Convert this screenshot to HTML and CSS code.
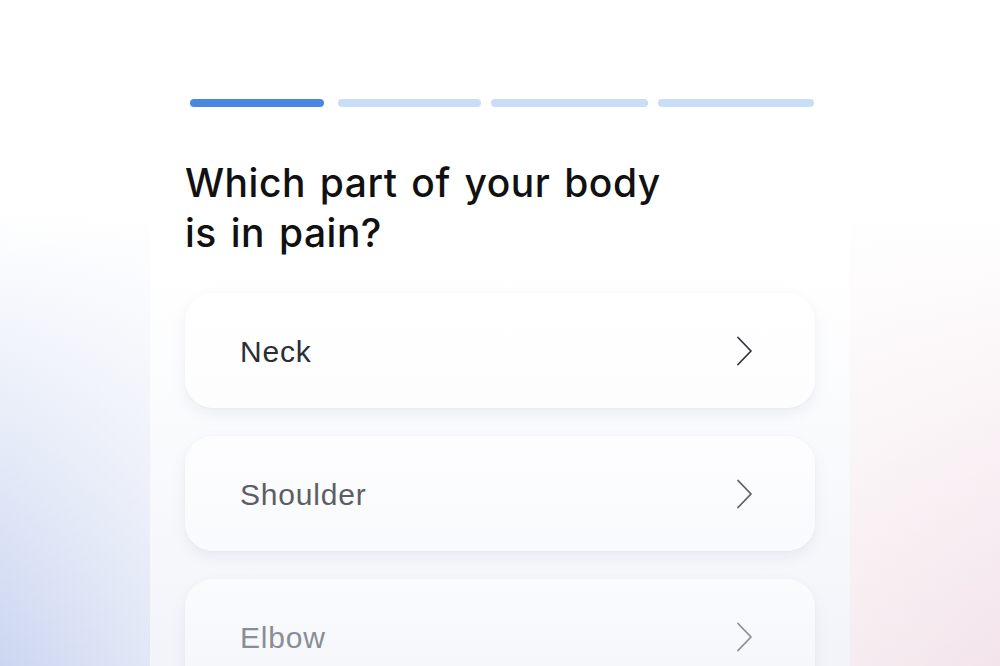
FILE: index.html
```html
<!DOCTYPE html>
<html lang="en">
<head>
<meta charset="utf-8">
<title>Pain location</title>
<link rel="stylesheet" href="styles.css">
</head>
<body>
<div class="page">
  <main class="panel">
    <div class="progress">
      <span class="seg seg-1 active"></span>
      <span class="seg seg-2"></span>
      <span class="seg seg-3"></span>
      <span class="seg seg-4"></span>
    </div>
    <h1 class="title">Which part of your body<br>is in pain?</h1>
    <ul class="options">
      <li class="option opt-1"><span class="label">Neck</span>
        <svg class="chev" viewBox="0 0 20 30" width="20" height="30"><path d="M3 1.5 L16 15 L3 28.5" fill="none" stroke="currentColor" stroke-width="1.8" stroke-linecap="round" stroke-linejoin="round"/></svg>
      </li>
      <li class="option opt-2"><span class="label">Shoulder</span>
        <svg class="chev" viewBox="0 0 20 30" width="20" height="30"><path d="M3 1.5 L16 15 L3 28.5" fill="none" stroke="currentColor" stroke-width="1.8" stroke-linecap="round" stroke-linejoin="round"/></svg>
      </li>
      <li class="option opt-3"><span class="label">Elbow</span>
        <svg class="chev" viewBox="0 0 20 30" width="20" height="30"><path d="M3 1.5 L16 15 L3 28.5" fill="none" stroke="currentColor" stroke-width="1.8" stroke-linecap="round" stroke-linejoin="round"/></svg>
      </li>
    </ul>
  </main>
</div>
</body>
</html>
```

FILE: styles.css
```css
html, body {
  margin: 0;
  padding: 0;
  height: 100%;
  overflow: hidden;
}
body {
  font-family: "Liberation Sans", Arial, sans-serif;
  background:
    linear-gradient(to bottom, #ffffff 0%, #ffffff 32%, rgba(255,255,255,0) 100%),
    linear-gradient(to right, #cbd6f1 0%, #e2e7f6 15%, #f4f1f6 50%, #f6ecf0 85%, #f3e4eb 100%);
}
.page {
  min-height: 666px;
  display: flex;
  justify-content: center;
}
.panel {
  width: 700px;
  box-sizing: border-box;
  padding: 99px 35px 0 35px;
  background: linear-gradient(to bottom, #ffffff 0%, #ffffff 38%, #f8f9fc 70%, #f2f3f9 100%);
}
.progress {
  display: flex;
  height: 8px;
  padding: 0 1px 0 5px;
}
.seg {
  display: block;
  height: 8px;
  border-radius: 4px;
  background: #c9ddf8;
}
.seg.active { background: #4a87e1; }
.seg-1 { width: 134px; margin-right: 14px; }
.seg-2 { width: 143px; margin-right: 10px; }
.seg-3 { width: 157px; margin-right: 10px; }
.seg-4 { width: 156px; }
.title {
  margin: 51px 0 0 0;
  font-family: Inter, "Open Sans", sans-serif;
  font-weight: 500;
  font-size: 39px;
  line-height: 50px;
  letter-spacing: 0.5px;
  word-spacing: 3px;
  color: #111111;
}
.options {
  list-style: none;
  margin: 35px 0 0 0;
  padding: 0;
  display: flex;
  flex-direction: column;
  gap: 28px;
}
.option {
  height: 115px;
  border-radius: 28px;
  background: linear-gradient(to bottom, #ffffff 0%, #fdfdfe 100%);
  box-shadow: 0 6px 14px rgba(120, 130, 160, 0.10), 0 1px 3px rgba(120,130,160,0.05);
  display: flex;
  align-items: center;
  justify-content: space-between;
  padding: 0 60px 0 55px;
}
.label {
  font-size: 30px;
  letter-spacing: 0.8px;
  padding-top: 2px;
}
.chev { display: block; }
.opt-1 { color: #2b2e34; }
.opt-2 { color: #5b5e64; background: linear-gradient(to bottom, #fdfdfe, #f9fafd); }
.opt-3 { color: #8a8d94; background: linear-gradient(to bottom, #fafbfd, #f5f6fb); }
.opt-1 .chev { color: #33363c; }
.opt-2 .chev { color: #5b5e64; }
.opt-3 .chev { color: #8a8d94; }
```
